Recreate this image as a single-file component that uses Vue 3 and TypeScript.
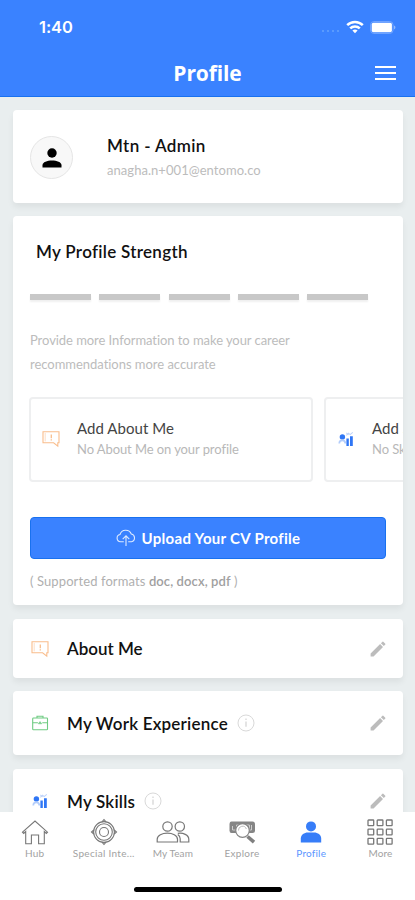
<script setup lang="ts">
import { h, type FunctionalComponent } from 'vue'

interface Section { title: string; icon: string; info: boolean; size: string }
interface Tab { label: string; icon: string; key: string }

const sections: Section[] = [
  { title: 'About Me', icon: 'about', info: false, size: 'short' },
  { title: 'My Work Experience', icon: 'work', info: true, size: 'tall' },
  { title: 'My Skills', icon: 'skills', info: true, size: 'tall' },
]

const suggestions = [
  { title: 'Add About Me', note: 'No About Me on your profile', icon: 'about' },
  { title: 'Add Skills', note: 'No Skills on your profile', icon: 'skills' },
]

const tabs: Tab[] = [
  { label: 'Hub', icon: 'hub', key: 'hub' },
  { label: 'Special Inte...', icon: 'special', key: 'special' },
  { label: 'My Team', icon: 'team', key: 'team' },
  { label: 'Explore', icon: 'explore', key: 'explore' },
  { label: 'Profile', icon: 'profile', key: 'profile' },
  { label: 'More', icon: 'more', key: 'more' },
]

const CategoryIcon: FunctionalComponent<{ name: string }> = (props) => {
  const svg = (color: string, children: ReturnType<typeof h>[]) =>
    h('svg', { viewBox: '0 0 18 18', width: 18, height: 18, fill: 'none', stroke: color, 'stroke-width': 1.1 }, children)
  if (props.name === 'about') {
    return svg('#f9bd8c', [
      h('path', { d: 'M1 1.7h16v11h-1.2v3.4l-4.2-3.4H1z' }),
      h('path', { d: 'M3.2 3v8.4', 'stroke-width': 0.5 }),
      h('path', { d: 'M9.3 4.6v3.6M9.3 9.2v1.2', 'stroke-width': 1.3 }),
    ])
  }
  if (props.name === 'work') {
    return svg('#6fcb82', [
      h('rect', { x: 1.7, y: 4, width: 14.8, height: 11.8, rx: 0.8 }),
      h('path', { d: 'M6 4V2.2h6V4M1.7 8.8h5.2M11.3 8.8h5.2' }),
      h('path', { d: 'M7.2 9.8L9 7.5l1.8 2.3z', fill: '#6fcb82', 'stroke-width': 0.5 }),
    ])
  }
  return svg('none', [
    h('circle', { cx: 5.4, cy: 7, r: 2.7, fill: '#2f76f5' }),
    h('path', { d: 'M1.4 13.4c0-5.4 7.8-5.4 7.8 0H7.4c0-2.8-4.2-2.8-4.2 0z', fill: '#b3cdfb' }),
    h('path', { d: 'M9.4 8.6h2.4V16H9.4zM13 6.2h2.8V16H13z', fill: '#2f76f5' }),
    h('path', { d: 'M9.3 5.4l2.3-2.2 1.5 1.4L15.8 2.3M9.3 2.8l2.4 2', stroke: '#bfd4fa', 'stroke-width': 1.1 }),
  ])
}
</script>

<template>
  <div class="screen">
    <header class="header">
      <div class="status">
        <span class="time">1:40</span>
        <div class="signals">
          <svg class="dots" width="20" height="5" viewBox="0 0 20 5" fill="#62a0fe"><circle cx="2" cy="2" r="1.1" /><circle cx="7" cy="2" r="1.1" /><circle cx="12" cy="2" r="1.1" /><circle cx="17" cy="2" r="1.1" /></svg>
          <svg class="wifi" width="18" height="14" viewBox="0 0 18 14" fill="none" stroke="#fff" stroke-width="2.5"><path d="M1.2 5.2a11 11 0 0 1 15.6 0M4.2 8.4a6.8 6.8 0 0 1 9.6 0" /><path d="M6.4 10.6a3.8 3.8 0 0 1 5.2 0L9 13.3z" fill="#fff" stroke="none" /></svg>
          <svg width="26" height="13" viewBox="0 0 26 13"><rect x=".6" y=".6" width="22.4" height="11.8" rx="3.2" fill="none" stroke="#75a7ff" /><rect x="1.7" y="1.7" width="20.2" height="9.6" rx="1.7" fill="#fff" /><path d="M24.2 4.6c1.6.7 1.6 3.1 0 3.8z" fill="#a4c5ff" /></svg>
        </div>
      </div>
      <div class="titlebar">
        <h1>Profile</h1>
        <button class="menu" aria-label="Menu"><i /><i /><i /></button>
      </div>
    </header>

    <main class="content">
      <section class="card user">
        <div class="avatar">
          <svg width="20" height="20" viewBox="0 0 20 20"><circle cx="10" cy="5" r="4.7" /><path d="M.5 19.5v-2.2C.5 11 19.5 11 19.5 17.3v2.2z" /></svg>
        </div>
        <div class="identity">
          <h2>Mtn - Admin</h2>
          <p>anagha.n+001@entomo.co</p>
        </div>
      </section>

      <section class="card strength">
        <h2>My Profile Strength</h2>
        <div class="bars"><i v-for="n in 5" :key="n" /></div>
        <p class="hint"><span class="line-one">Provide more Information to make your career</span><br><span class="line-two">recommendations more accurate</span></p>
        <div class="suggestions">
          <article v-for="s in suggestions" :key="s.title" class="suggestion">
            <CategoryIcon :name="s.icon" />
            <div>
              <h3>{{ s.title }}</h3>
              <p>{{ s.note }}</p>
            </div>
          </article>
        </div>
        <button class="upload">
          <svg width="20" height="18" viewBox="0 0 20 18" fill="none" stroke="#dce9ff" stroke-width="1.1"><path d="M7.8 12.8H4.5A3.7 3.7 0 0 1 4 5.5 6 6 0 0 1 15.3 5a4 4 0 0 1 .2 7.8h-3.3M10 17V7M6.7 10.1L10 6.8l3.3 3.3" /></svg>
          <span>Upload Your CV Profile</span>
        </button>
        <p class="formats">( Supported formats <b>doc, docx, pdf</b> )</p>
      </section>

      <section v-for="s in sections" :key="s.title" class="card row" :class="[s.size, s.icon]">
        <CategoryIcon :name="s.icon" />
        <h2>{{ s.title }}</h2>
        <svg v-if="s.info" class="info" width="18" height="18" viewBox="0 0 18 18" fill="none" stroke="#d9d9d9"><circle cx="9" cy="9" r="8" /><path d="M9 4.5v1.6M9 7.5v5.3" stroke-width="1.4" /></svg>
        <svg class="pencil" width="16" height="16" viewBox="0 0 16 16" fill="#bcbcbc"><path d="M.6 12.6L10.1 3l2.9 2.9-9.5 9.5H.6zM10.9 2.2L12.5.7q.4-.4.8 0l2 2q.4.4 0 .8l-1.5 1.6z" /></svg>
      </section>
    </main>

    <footer class="tabs">
      <nav>
        <a v-for="t in tabs" :key="t.key" :class="['tab', t.key]">
          <svg v-if="t.icon === 'hub'" width="28" height="28" viewBox="0 0 28 28" fill="none" stroke="#777" stroke-width="1.1"><path d="M1.5 14.2L14 3l12.5 11.2-1.2 1.2-2-1.8v12.2h-5.7v-8.8h-7.2v8.8H4.7V13.6l-2 1.8z" /></svg>
          <svg v-else-if="t.icon === 'special'" width="28" height="28" viewBox="0 0 28 28" fill="none" stroke="#777" stroke-width="1.1"><circle cx="14" cy="14" r="10.4" /><circle cx="14" cy="14" r="8.3" /><circle cx="14" cy="14" r="4.5" /><path d="M12 3.8l2-2.3 2 2.3M12 24.2l2 2.3 2-2.3M3.8 12l-2.3 2 2.3 2M24.2 12l2.3 2-2.3 2" /></svg>
          <svg v-else-if="t.icon === 'team'" width="34" height="28" viewBox="0 0 34 28" fill="none" stroke="#777" stroke-width="1.2"><circle cx="11.5" cy="8.5" r="4.7" /><path d="M1.2 24v-2.8c0-8 20.3-8 20.3 0V24z" /><circle cx="23.8" cy="8.5" r="4.7" /><path d="M21.8 15.4c5.2-1 11 1.6 11 5.8V24h-8.6v-3.2c0-1.8-1-3.2-2.4-4.2" /></svg>
          <svg v-else-if="t.icon === 'explore'" width="28" height="28" viewBox="0 0 28 28"><path d="M3.5 3.5h21q2.5 0 2.5 3V13q0 2-2.5 2h-21Q1.5 15 1.5 12.5v-6q0-3 2-3z" fill="#858585" /><path d="M4.5 8v4h4V7h13v5h2V7" fill="none" stroke="#d5d5d5" stroke-width=".9" /><circle cx="14.5" cy="12.5" r="6.8" fill="#fff" stroke="#858585" stroke-width="1.2" /><path d="M10.5 12.5a4 4 0 0 1 7.8-1.5" fill="none" stroke="#bbb" /><path d="M19.5 18.5l6.5 5.7" stroke="#808080" stroke-width="3.6" /></svg>
          <svg v-else-if="t.icon === 'profile'" width="28" height="28" viewBox="0 0 28 28" fill="#377df8"><circle cx="14" cy="8.4" r="5" /><path d="M3.8 24.5v-4c0-3.8 3.5-6 7-6h6.4c3.5 0 7 2.2 7 6v4z" /></svg>
          <svg v-else width="28" height="28" viewBox="0 0 28 28" fill="none" stroke="#777" stroke-width="1.3"><template v-for="y in 3" :key="y"><rect v-for="x in 3" :key="x" :x="x * 9.2 - 7.2" :y="y * 9.2 - 7.2" width="5.7" height="5.7" rx=".6" /></template></svg>
          <span>{{ t.label }}</span>
        </a>
      </nav>
      <div class="home" />
    </footer>
  </div>
</template>

<style>
body { background: #e9eeef; overflow: hidden; }
</style>

<style scoped>
* { box-sizing: border-box; }
h1, h2, h3, p { margin: 0; white-space: nowrap; }
button { border: 0; padding: 0; font: inherit; }
svg { display: block; flex: none; }
.screen { width: 100%; height: 900px; display: flex; flex-direction: column; overflow: hidden; background: #e9eeef; font-family: Lato, "Open Sans", sans-serif; color: #111; }
.header { height: 97px; flex: none; background: #3a82ff; border-bottom: 1px solid #1971ef; color: #fff; }
.status { height: 54px; display: flex; justify-content: space-between; padding: 0 19px 0 39px; align-items: center; }
.time { font: 600 16.5px/20px Inter, sans-serif; letter-spacing: -.1px; }
.signals { display: flex; align-items: center; gap: 5px; }
.dots { margin-top: 9px; }
.wifi { margin-right: 1px; }
.titlebar { display: grid; grid-template-columns: 1fr auto 1fr; padding: 4px 19px 0; height: 42px; align-items: start; }
h1 { grid-column: 2; font: 700 21px/30px "Open Sans", sans-serif; letter-spacing: -.1px; }
.menu { justify-self: end; width: 21px; margin-top: 8px; display: grid; gap: 4px; background: none; }
.menu i { height: 2px; background: #fff; }
.content { flex: 1; min-height: 0; overflow: hidden; padding: 13px 12px 0 13px; display: flex; flex-direction: column; }
.card { flex: none; background: #fff; border-radius: 4px; box-shadow: 0 4px 6px #0000000f; }
h2 { font-size: 17px; line-height: 24px; font-weight: 600; }
.user { height: 93px; display: flex; padding: 26px 17px; gap: 34px; }
.avatar { width: 43px; height: 43px; border: 1px solid #e5e5e5; border-radius: 50%; background: #f8f8f8; display: grid; place-items: center; }
.user h2 { margin-top: -2px; letter-spacing: .38px; }
.user p { font-size: 13px; line-height: 24px; color: #bcbcbc; letter-spacing: .05px; }
.strength { height: 389px; margin-top: 13px; padding: 24px 0 0 17px; overflow: hidden; }
.strength h2 { padding-left: 6px; letter-spacing: .3px; }
.bars { display: grid; grid-template-columns: repeat(5, 61px); gap: 8.3px; margin-top: 30px; }
.bars i { height: 6px; background: #c8c8c8; box-shadow: 0 2px 2px #00000010; }
.hint { margin-top: 28px; color: #bcbcbc; font-size: 13px; line-height: 24px; }
.line-one { letter-spacing: -.06px; }
.line-two { letter-spacing: -.03px; }
.suggestions { display: flex; gap: 11px; margin: 21px 0 0 -1px; overflow: hidden; }
.suggestion { width: 284px; height: 85px; border: 2px solid #eeeff0; border-radius: 4px; flex: none; display: flex; padding: 19px 11px; gap: 17px; }
.suggestion > svg { margin-top: 12px; }
h3 { font-size: 15px; line-height: 20px; font-weight: 400; color: #444; letter-spacing: .06px; }
.suggestion p { font-size: 13px; line-height: 22px; color: #b8b8b8; letter-spacing: -.08px; }
.upload { display: flex; align-items: center; justify-content: center; gap: 6px; width: 356px; height: 42px; margin-top: 35px; border: 1px solid #1971ef; border-radius: 4px; background: #3a82ff; color: #fff; font-size: 15px; font-weight: 700; letter-spacing: .3px; }
.formats { margin-top: 12px; font-size: 13px; line-height: 20px; color: #b0b0b0; letter-spacing: .1px; }
.formats b { font-weight: 600; color: #a0a0a0; }
.row { margin-top: 14px; display: flex; align-items: center; padding: 0 17px 0 18px; }
.row.short { height: 59px; }
.row.tall { height: 64px; }
.row.tall h2 { padding-top: 2px; letter-spacing: .2px; }
.row.work { margin-top: 13px; }
.row h2 { margin-left: 18px; }
.info { margin-left: 9px; }
.pencil { margin-left: auto; }
.tabs { flex: none; height: 88px; background: #fff; padding-top: 6px; }
nav { display: grid; grid-template-columns: repeat(6, 1fr); height: 68px; }
.tab { display: flex; flex-direction: column; align-items: center; color: #a2a2a2; font-size: 10px; line-height: 14px; white-space: nowrap; letter-spacing: .1px; }
.tab.special span { letter-spacing: .3px; }
.tab.explore span { letter-spacing: .3px; }
.tab.profile { color: #5b96ff; letter-spacing: .2px; }
.home { width: 148px; height: 5px; margin: 1px auto 0; border-radius: 3px; background: #000; }
</style>
